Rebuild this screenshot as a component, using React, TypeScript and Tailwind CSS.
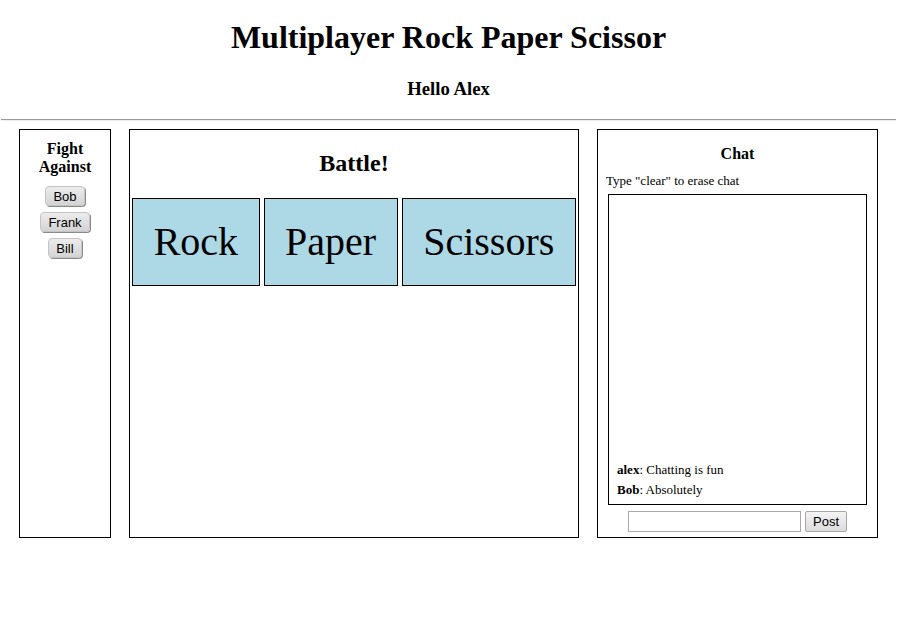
import React from "react";

const serif = { fontFamily: '"Liberation Serif", "Times New Roman", serif' };

function GrayButton({ label }: { label: string }) {
  return (
    <button
      className="h-[20px] px-[7px] rounded-[4px] border border-[#c4c4c4] bg-gradient-to-b from-[#ececec] to-[#d4d4d4] shadow-[1px_1px_0_#8a8a8a] text-[13px] leading-[15px] text-black"
      style={{ fontFamily: '"Liberation Sans", Arial, sans-serif' }}
    >
      {label}
    </button>
  );
}

export default function App() {
  return (
    <div className="w-[897px] h-[624px] bg-white text-black" style={serif}>
      <h1 className="pt-[19px] text-center text-[32px] leading-[37px] font-bold">
        Multiplayer Rock Paper Scissor
      </h1>
      <h3 className="mt-[22px] text-center text-[18.72px] leading-[22px] font-bold">Hello Alex</h3>
      <div className="mt-[19px] mx-[1px] border-t border-b border-t-[#9a9a9a] border-b-[#eeeeee]" />
      <div className="mt-[8px] flex ml-[19px] gap-[18px] h-[409px]">
        {/* Left panel */}
        <div className="w-[92px] border border-black flex flex-col items-center pt-[10px]">
          <div className="text-center text-[16px] leading-[18px] font-bold">
            Fight
            <br />
            Against
          </div>
          <div className="mt-[10px] flex flex-col items-center gap-[6px]">
            <GrayButton label="Bob" />
            <GrayButton label="Frank" />
            <GrayButton label="Bill" />
          </div>
        </div>

        {/* Middle panel */}
        <div className="w-[450px] border border-black flex flex-col pt-[19px]">
          <h2 className="text-center text-[24px] leading-[28px] font-bold">Battle!</h2>
          <div className="mt-[21px] flex justify-center gap-[4px]">
            {["Rock", "Paper", "Scissors"].map((w) => (
              <div
                key={w}
                className="border border-black bg-[#add8e6] py-[20px] px-[20.5px] text-[40px] leading-[46px]"
              >
                {w}
              </div>
            ))}
          </div>
        </div>

        {/* Chat panel */}
        <div className="w-[281px] border border-black flex flex-col pt-[15px] pb-[5px]">
          <h3 className="text-center text-[16px] leading-[18px] font-bold">Chat</h3>
          <p className="mt-[10px] pl-[8px] text-[13px] leading-[15px]">Type "clear" to erase chat</p>
          <div className="mt-[6px] mx-[10px] flex-1 border border-black flex flex-col justify-end pl-[8px] pb-[4px] text-[13px] leading-[20px]">
            <div>
              <b>alex</b>: Chatting is fun
            </div>
            <div>
              <b>Bob</b>: Absolutely
            </div>
          </div>
          <div className="mt-[6px] flex justify-center gap-[4px]">
            <input
              type="text"
              className="w-[173px] h-[21px] border border-[#a9a9a9] bg-white outline-none"
            />
            <button
              className="w-[42px] h-[21px] rounded-[2px] border border-[#a6a6a6] bg-gradient-to-b from-[#f4f4f4] to-[#dcdcdc] text-[13px] leading-[15px] text-black"
              style={{ fontFamily: '"Liberation Sans", Arial, sans-serif' }}
            >
              Post
            </button>
          </div>
        </div>
      </div>
    </div>
  );
}
